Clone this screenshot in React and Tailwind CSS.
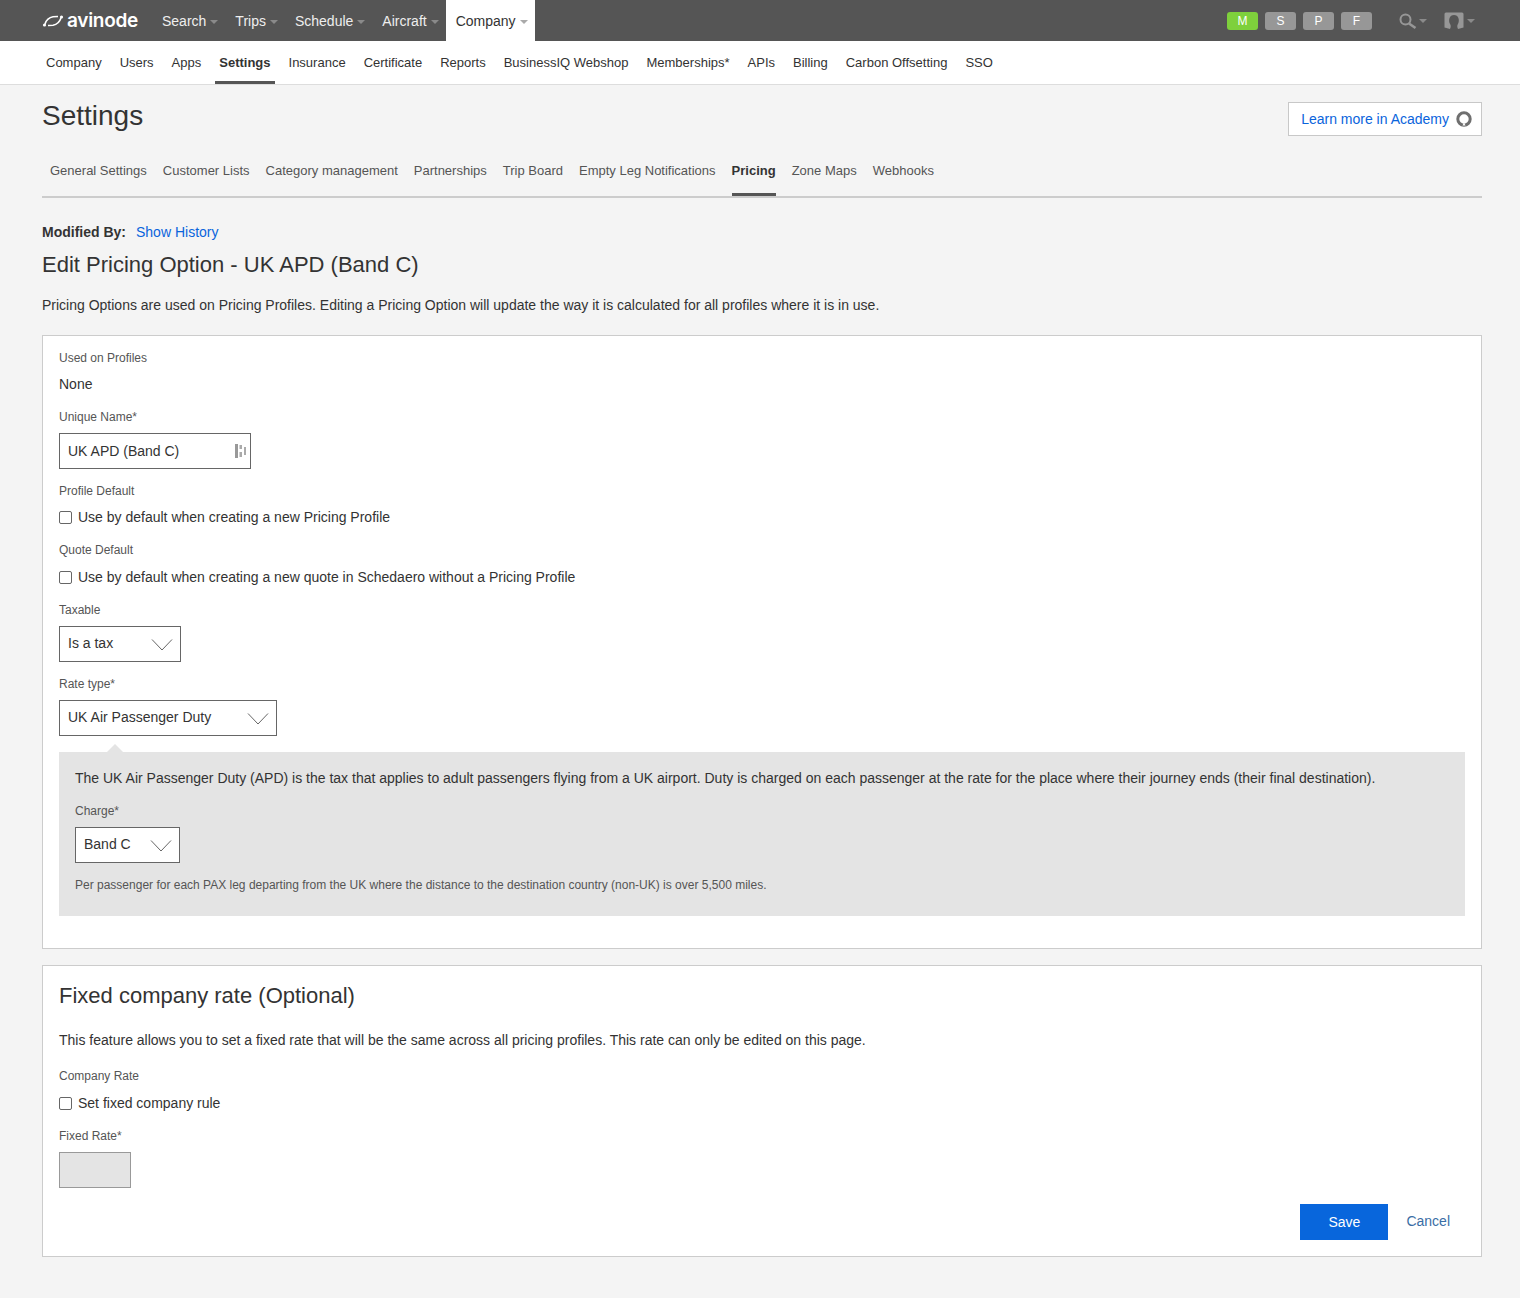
import React from 'react';

const topLinks = ['Search', 'Trips', 'Schedule', 'Aircraft'];
const subLinks = ['Company', 'Users', 'Apps', 'Settings', 'Insurance', 'Certificate', 'Reports', 'BusinessIQ Webshop', 'Memberships*', 'APIs', 'Billing', 'Carbon Offsetting', 'SSO'];
const tabs = ['General Settings', 'Customer Lists', 'Category management', 'Partnerships', 'Trip Board', 'Empty Leg Notifications', 'Pricing', 'Zone Maps', 'Webhooks'];
const badges = ['M', 'S', 'P', 'F'];

const Caret = ({ color = 'border-t-[#8a8a8a]', className = 'ml-[4px]' }) => (
  <span className={`mt-[1px] inline-block h-0 w-0 border-x-[4px] border-t-[4px] border-x-transparent ${className} ${color}`} />
);

const Chevron = () => (
  <svg width="22" height="13" viewBox="0 0 22 13" fill="none" stroke="#666" strokeWidth="1">
    <path d="M1 1.5 L11 12 L21 1.5" />
  </svg>
);

const Label = ({ children, className = '' }) => (
  <div className={`text-[12px] leading-[16px] text-[#555] ${className}`}>{children}</div>
);

const Select = ({ value, width }) => (
  <div className={`flex h-[36px] items-center justify-between border border-[#666] bg-white pl-[8px] pr-[7px] text-[14px] text-[#333] ${width}`}>
    <span className="pb-[2px]">{value}</span>
    <Chevron />
  </div>
);

const Check = ({ children }) => (
  <label className="flex items-center text-[14px] leading-[20px] text-[#333]">
    <span className="mr-[6px] inline-block h-[13px] w-[13px] rounded-[2px] border border-[#666] bg-white" />
    {children}
  </label>
);

export default function App() {
  return (
    <div className="min-h-[1298px] bg-[#f4f4f4] font-['Liberation_Sans',Arial,sans-serif] text-[#333]">
      <header className="flex h-[41px] items-center bg-[#555] pl-[42px] pr-[45px] text-[14px] text-white">
        <div className="flex w-[110px] items-center">
          <svg width="22" height="12" viewBox="0 0 22 12" fill="none" stroke="white" strokeWidth="1.6">
            <path d="M3 9 C4 6 7 2.5 11 1.8 L16 1.5" />
            <path d="M19 3 C18 6 15 9.5 11 10.2 L6 10.5" />
            <circle cx="2.5" cy="10" r="1.6" fill="white" stroke="none" />
            <circle cx="19.5" cy="2" r="1.6" fill="white" stroke="none" />
          </svg>
          <span className="ml-[3px] font-['Inter',sans-serif] text-[19px] font-semibold leading-[20px] tracking-[-0.3px]">avinode</span>
        </div>
        <nav className="ml-[10px] flex items-center pt-[1px]">
          {topLinks.map((l) => (
            <span key={l} className="mr-[17px] flex items-center text-[#eee]">{l}<Caret /></span>
          ))}
        </nav>
        <div className="-ml-[10px] flex h-[41px] items-center bg-white pl-[10px] pr-[7px] pt-[1px] text-[#333]">Company<Caret color="border-t-[#aaa]" /></div>
        <div className="ml-auto flex items-center">
          {badges.map((b, i) => (
            <span key={b} className={`mr-[7px] flex h-[18px] w-[31px] items-center justify-center rounded-[3px] text-[12px] ${i === 0 ? 'bg-[#7ed03c]' : 'bg-[#979797]'}`}>{b}</span>
          ))}
          <svg className="ml-[20px]" width="18" height="18" viewBox="0 0 18 18" fill="none" stroke="#979797">
            <circle cx="6.5" cy="7.5" r="5" strokeWidth="2" />
            <path d="M10 11.5 L16.5 16" strokeWidth="2.6" />
          </svg>
          <Caret className="ml-[2px]" />
          <svg className="ml-[17px]" width="20" height="18" viewBox="0 0 20 18">
            <path fill="#979797" d="M2 0.5 H18 Q19.5 0.5 19.5 2 V15.5 L14 17 C13 14.5 13 13.5 14 12 C16 8 14.5 3 10 3 C5.5 3 4 8 6 12 C7 13.5 7 14.5 6 17 L0.5 15.5 V2 Q0.5 0.5 2 0.5 Z" />
          </svg>
          <Caret className="ml-[3px]" />
        </div>
      </header>

      <nav className="flex h-[44px] items-stretch border-b border-[#ddd] bg-white pl-[41px] text-[13px] text-[#333]">
        {subLinks.map((l) => (
          <span key={l} className={`flex items-center border-b-[3px] pt-[3px] ${l === 'Settings' ? 'ml-[1px] mr-[9px] border-[#555] px-[4px] font-bold' : 'mr-[8px] border-transparent px-[5px]'}`}>{l}</span>
        ))}
      </nav>

      <main className="pl-[42px] pr-[38px]">
        <div className="flex items-start justify-between">
          <h1 className="mt-[14px] text-[28px] leading-[34px]">Settings</h1>
          <a className="mt-[17px] flex h-[34px] items-center border border-[#c8c8c8] bg-white pl-[12px] pr-[9px] text-[14px] text-[#0a64dc]">
            Learn more in Academy
            <svg className="ml-[7px]" width="16" height="16" viewBox="0 0 16 16" fill="none">
              <circle cx="8" cy="8" r="6.2" stroke="#6f6f6f" strokeWidth="3" />
              <path d="M6.5 14.5 L8 11.5 L9.5 14.5" fill="white" />
            </svg>
          </a>
        </div>

        <div className="mt-[16px] flex h-[46px] items-stretch gap-[16px] border-b-2 border-[#ccc] pl-[8px] text-[13px] text-[#555]">
          {tabs.map((t) => (
            <span key={t} className={`flex items-center border-b-[3px] pb-[3px] ${t === 'Pricing' ? 'border-[#555] font-bold text-[#333]' : 'border-transparent'}`}>{t}</span>
          ))}
        </div>

        <div className="mt-[24px] flex text-[14px] leading-[20px]">
          <span className="font-bold">Modified By:</span>
          <a className="ml-[10px] text-[#0a64dc]">Show History</a>
        </div>
        <h2 className="mt-[9px] text-[22px] leading-[28px]">Edit Pricing Option - UK APD (Band C)</h2>
        <p className="mt-[16px] text-[14px] leading-[20px]">Pricing Options are used on Pricing Profiles. Editing a Pricing Option will update the way it is calculated for all profiles where it is in use.</p>

        <section className="mt-[20px] h-[614px] border border-[#ccc] bg-white px-[16px] pt-[14px]">
          <Label>Used on Profiles</Label>
          <div className="mt-[8px] text-[14px] leading-[20px]">None</div>
          <Label className="mt-[15px]">Unique Name*</Label>
          <div className="mt-[8px] flex h-[36px] w-[192px] items-center justify-between border border-[#666] pl-[8px] pr-[4px] text-[14px]">
            <span>UK APD (Band C)</span>
            <svg width="12" height="14" viewBox="0 0 12 14">
              <path fill="#999" d="M1 0 H4 V14 H1 Z" />
              <path fill="#aaa" d="M5.5 1 H8 V5 H5.5 Z M5.5 8 H8 V13 H5.5 Z M10 3 H12 V11 H10 Z" />
            </svg>
          </div>
          <Label className="mt-[14px]">Profile Default</Label>
          <div className="mt-[8px]"><Check>Use by default when creating a new Pricing Profile</Check></div>
          <Label className="mt-[15px]">Quote Default</Label>
          <div className="mt-[9px]"><Check>Use by default when creating a new quote in Schedaero without a Pricing Profile</Check></div>
          <Label className="mt-[15px]">Taxable</Label>
          <div className="mt-[8px]"><Select value="Is a tax" width="w-[122px]" /></div>
          <Label className="mt-[14px]">Rate type*</Label>
          <div className="mt-[8px]"><Select value="UK Air Passenger Duty" width="w-[218px]" /></div>

          <div className="relative mt-[16px] h-[164px] bg-[#e4e4e4] px-[16px] pt-[16px]">
            <span className="absolute -top-[8px] left-[48px] h-0 w-0 border-x-[8px] border-b-[8px] border-x-transparent border-b-[#e4e4e4]" />
            <p className="text-[14px] leading-[20px]">The UK Air Passenger Duty (APD) is the tax that applies to adult passengers flying from a UK airport. Duty is charged on each passenger at the rate for the place where their journey ends (their final destination).</p>
            <Label className="mt-[15px]">Charge*</Label>
            <div className="mt-[8px]"><Select value="Band C" width="w-[105px]" /></div>
            <p className="mt-[14px] text-[12px] leading-[16px] text-[#555]">Per passenger for each PAX leg departing from the UK where the distance to the destination country (non-UK) is over 5,500 miles.</p>
          </div>
        </section>

        <section className="mt-[16px] h-[292px] border border-[#ccc] bg-white px-[16px] pt-[16px]">
          <h3 className="text-[22px] leading-[28px]">Fixed company rate (Optional)</h3>
          <p className="mt-[20px] text-[14px] leading-[20px]">This feature allows you to set a fixed rate that will be the same across all pricing profiles. This rate can only be edited on this page.</p>
          <Label className="mt-[18px]">Company Rate</Label>
          <div className="mt-[9px]"><Check>Set fixed company rule</Check></div>
          <Label className="mt-[15px]">Fixed Rate*</Label>
          <div className="mt-[8px] h-[36px] w-[72px] border border-[#999] bg-[#e4e4e4]" />
          <div className="mt-[16px] flex items-center justify-end pr-[15px]">
            <button className="h-[36px] w-[88px] bg-[#0866dc] text-[14px] text-white">Save</button>
            <a className="ml-[18px] -mt-[2px] text-[14px] text-[#3a6ea5]">Cancel</a>
          </div>
        </section>
      </main>
    </div>
  );
}
